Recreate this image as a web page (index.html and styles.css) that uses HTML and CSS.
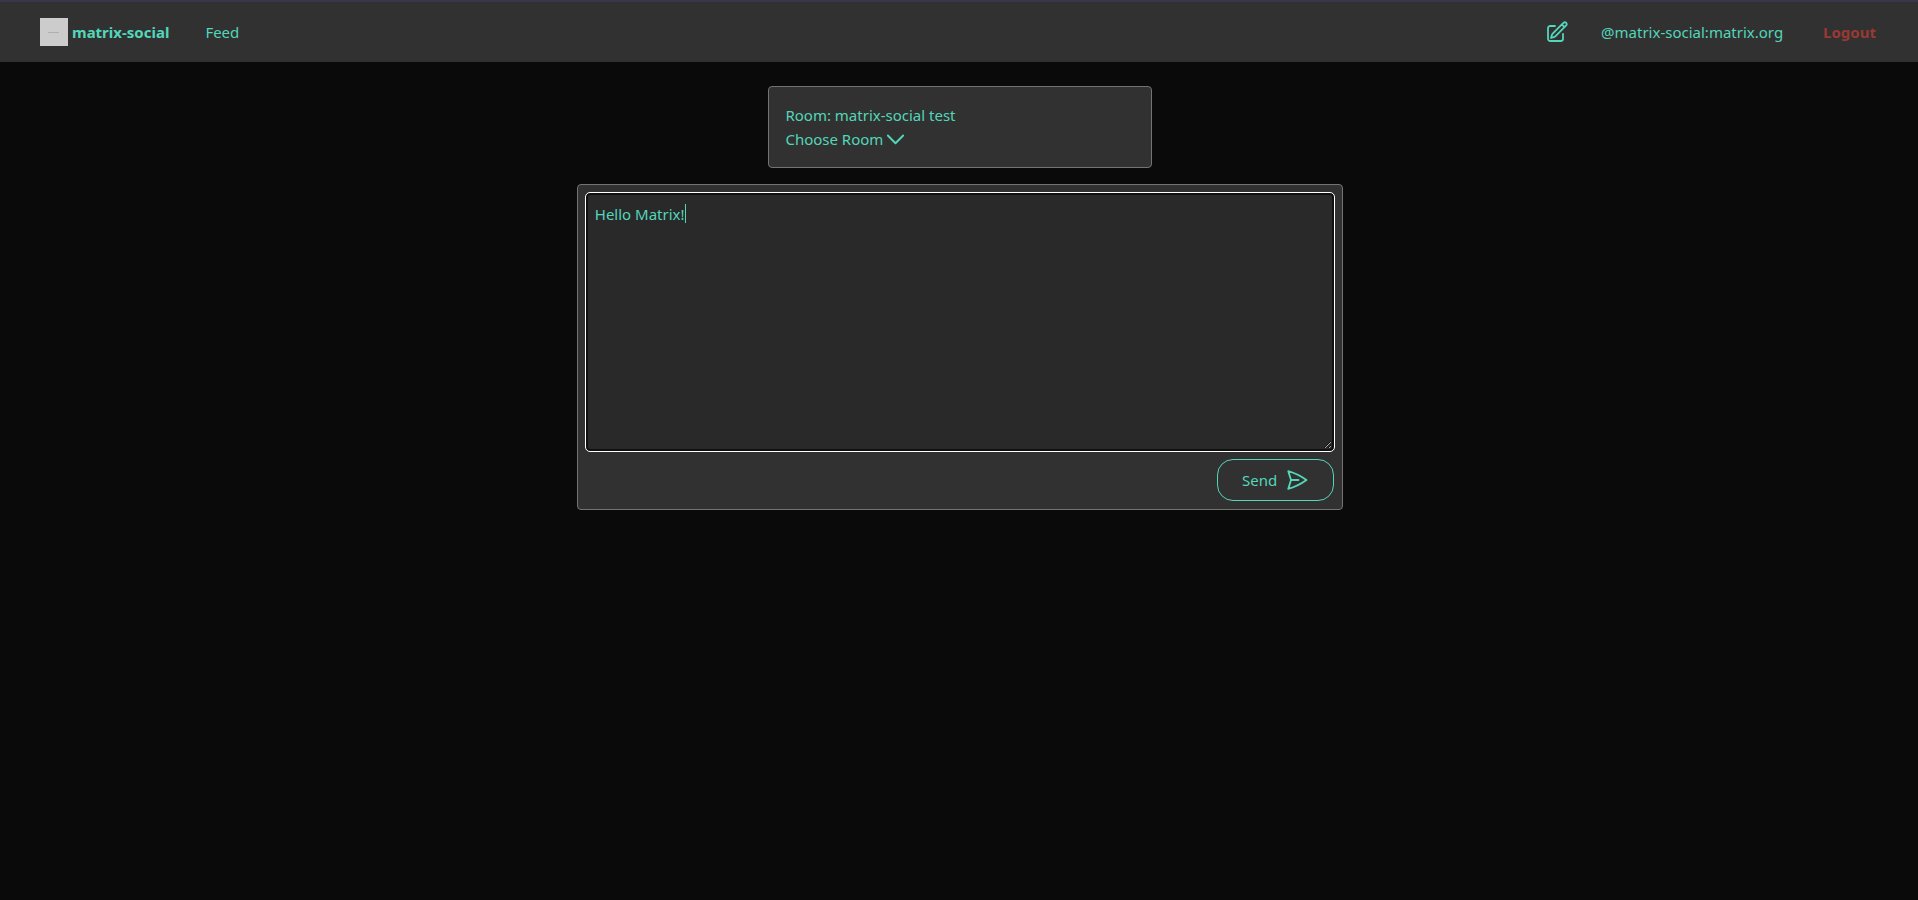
FILE: index.html
```html
<!DOCTYPE html>
<html lang="en">
<head>
  <meta charset="utf-8">
  <title>matrix-social</title>
  <link rel="stylesheet" href="styles.css">
</head>
<body>
  <header class="navbar">
    <nav class="nav-left">
      <a class="brand" href="#">
        <svg class="logo" viewBox="0 0 28 28" aria-hidden="true">
          <rect width="28" height="28" fill="#cccccc"/>
          <path d="M8 14.500h11" stroke="#b0b0b0"/>
        </svg>
        matrix-social
      </a>
      <a href="#">Feed</a>
    </nav>
    <nav class="nav-right">
      <a class="compose" href="#" aria-label="New post">
        <svg class="icon" viewBox="0 0 24 24" fill="none" stroke="currentColor" stroke-width="1.800" stroke-linecap="round" stroke-linejoin="round">
          <path d="M16.862 4.487l1.687-1.688a1.875 1.875 0 1 1 2.652 2.652L10.582 16.070a4.500 4.500 0 0 1-1.897 1.130L6 18l.8-2.685a4.500 4.500 0 0 1 1.130-1.897l8.932-8.931zm0 0L19.500 7.125M18 14v4.750A2.250 2.250 0 0 1 15.750 21H5.250A2.250 2.250 0 0 1 3 18.750V8.250A2.250 2.250 0 0 1 5.250 6H10"/>
        </svg>
      </a>
      <a class="user" href="#">@matrix-social:matrix.org</a>
      <button class="logout" type="button">Logout</button>
    </nav>
  </header>

  <main class="content">
    <section class="card room">
      <div>Room: matrix-social test</div>
      <button class="choose" type="button">
        Choose Room
        <svg class="chevron" viewBox="0 0 16 16" fill="none" stroke="currentColor" stroke-width="1.800" stroke-linecap="round" stroke-linejoin="round" aria-hidden="true">
          <path d="M0.800 4.200L8 11.500l7.200-7.300"/>
        </svg>
      </button>
    </section>

    <form class="card composer">
      <div class="editor">
        <textarea class="message" rows="10" aria-label="Message" spellcheck="false" autofocus>Hello Matrix!</textarea>
        <span class="caret"></span>
      </div>
      <button class="send" type="button">
        Send
        <svg class="icon" viewBox="0 0 24 24" fill="none" stroke="currentColor" stroke-width="1.800" stroke-linecap="round" stroke-linejoin="round" aria-hidden="true">
          <path d="M6 12L3.269 3.126A59.768 59.768 0 0 1 21.485 12 59.770 59.770 0 0 1 3.270 20.876L5.999 12zm0 0h7.500"/>
        </svg>
      </button>
    </form>
  </main>

  <script>
    // the drawn caret only marks the end of the draft, so drop it on the first edit
    const message = document.querySelector('.message');
    message.addEventListener('input', () => {
      document.querySelector('.caret').hidden = true;
      message.style.caretColor = 'auto';
    });
    message.setSelectionRange(message.value.length, message.value.length);
  </script>
</body>
</html>
```

FILE: styles.css
```css
* {
  box-sizing: border-box;
}

body {
  margin: 0;
  background-color: #0a0a0a;
  color: #53d6b9;
  font-family: "Noto Sans", sans-serif;
  font-size: 15px;
  line-height: 24px;
}

a {
  color: inherit;
  text-decoration: none;
}

button {
  padding: 0;
  border: none;
  background: none;
  color: inherit;
  font: inherit;
  cursor: pointer;
}

.navbar {
  display: flex;
  justify-content: space-between;
  align-items: center;
  padding: 16px 40px;
  border-top: 2px solid #38364a;
  background-color: #313131;
}

.nav-left,
.nav-right,
.brand {
  display: flex;
  align-items: center;
}

.nav-left {
  gap: 36px;
}

.brand {
  gap: 4px;
  font-weight: bold;
}

.logo {
  width: 28px;
  height: 28px;
}

.icon {
  display: block;
  width: 24px;
  height: 24px;
}

.compose {
  margin-right: 32px;
}

.user {
  margin-right: 40px;
}

.logout {
  margin-right: 2px;
  color: #993934;
  font-weight: bold;
}

.content {
  display: flex;
  flex-direction: column;
  align-items: center;
  gap: 16px;
  padding: 24px 0 24px 2px;
}

.card {
  border: 1px solid #737373;
  border-radius: 4px;
  background-color: #313131;
}

.room {
  width: 20%;
  min-width: 240px;
  padding: 16px;
}

.choose {
  display: flex;
  align-items: center;
  gap: 4px;
}

.chevron {
  width: 17px;
  height: 17px;
}

.composer {
  display: flex;
  flex-direction: column;
  gap: 8px;
  width: 40%;
  min-width: 320px;
  padding: 8px;
}

.editor {
  position: relative;
}

.message {
  display: block;
  width: 100%;
  padding: 7px;
  border: 2px solid #101010;
  border-radius: 4px;
  outline: 1px solid #ffffff;
  background-color: #292929;
  color: inherit;
  caret-color: transparent;
  font: inherit;
  resize: vertical;
}

.caret {
  position: absolute;
  top: 11px;
  left: 99px;
  width: 1px;
  height: 19px;
  background-color: #53d6b9;
}

.caret[hidden] {
  display: none;
}

.send {
  display: flex;
  align-items: center;
  align-self: flex-end;
  gap: 8px;
  padding: 8px 24px;
  border: 1px solid #53d6b9;
  border-radius: 16px;
}
```
